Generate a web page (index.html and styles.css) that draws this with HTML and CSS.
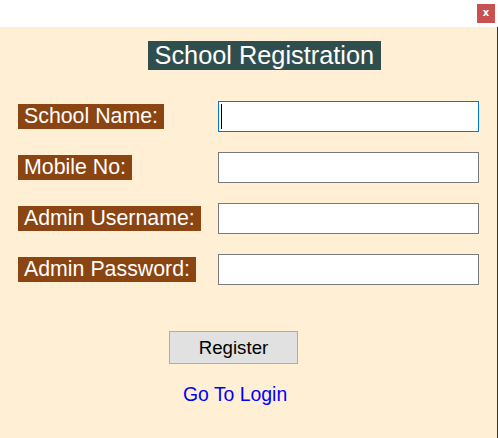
FILE: index.html
```html
<!DOCTYPE html>
<html>
<head>
<meta charset="utf-8">
<link rel="stylesheet" href="styles.css">
</head>
<body>
<div class="titlebar"><div class="close">x</div></div>
<div class="main">
  <div class="title">School Registration</div>
  <div class="form">
    <div class="label">School Name:</div>
    <div class="field"><input class="entry focused" type="text"><span class="caret"></span></div>
    <div class="label">Mobile No:</div>
    <div class="field"><input class="entry" type="text"></div>
    <div class="label">Admin Username:</div>
    <div class="field"><input class="entry" type="text"></div>
    <div class="label">Admin Password:</div>
    <div class="field"><input class="entry" type="password"></div>
  </div>
  <button class="register">Register</button>
  <div class="link">Go To Login</div>
</div>
</body>
</html>
```
FILE: styles.css
```css
html, body {
  margin: 0;
  padding: 0;
}
body {
  width: 498px;
  height: 438px;
  overflow: hidden;
  font-family: "Liberation Sans", Arial, sans-serif;
  background: #ffffff;
}
.titlebar {
  height: 27px;
  box-sizing: border-box;
  padding: 4px 3px 0 0;
  display: flex;
  justify-content: flex-end;
  align-items: flex-start;
  background: #ffffff;
}
.close {
  width: 18px;
  height: 19px;
  background: #c75050;
  color: #ffffff;
  font-family: "DejaVu Sans", sans-serif;
  font-weight: bold;
  font-size: 10px;
  line-height: 18px;
  text-align: center;
}
.main {
  width: 497px;
  height: 411px;
  background: #ffefd5;
  border-right: 1px solid #3c3128;
  display: flex;
  flex-direction: column;
  align-items: flex-start;
}
.title {
  margin: 14px 0 0 148px;
  background: #2f4f4f;
  color: #ffffff;
  font-size: 25.33px;
  line-height: 29px;
  padding: 0 6.5px;
}
.form {
  margin: 31px 0 0 18px;
  display: grid;
  grid-template-columns: 200px 261px;
  row-gap: 20px;
  align-items: center;
}
.label {
  justify-self: start;
  background: #8b4513;
  color: #ffffff;
  font-size: 21.33px;
  line-height: 25px;
  padding: 0 6px;
}
.field {
  position: relative;
  height: 31px;
}
.entry {
  display: block;
  width: 261px;
  height: 31px;
  box-sizing: border-box;
  margin: 0;
  padding: 0 3px;
  border: 1px solid #7a7a7a;
  background: #ffffff;
  outline: none;
  font-family: "Liberation Sans", Arial, sans-serif;
  font-size: 16px;
}
.entry.focused {
  border-color: #0078d7;
}
.caret {
  position: absolute;
  left: 3px;
  top: 3px;
  width: 1px;
  height: 25px;
  background: #000000;
}
.register {
  margin: 46px 0 0 169px;
  width: 129px;
  height: 33px;
  box-sizing: border-box;
  padding: 0;
  background: #e1e1e1;
  border: 1px solid #adadad;
  color: #000000;
  font-family: "Liberation Sans", Arial, sans-serif;
  font-size: 18.67px;
  line-height: 31px;
}
.link {
  margin: 19px 0 0 183px;
  color: #0000ff;
  font-size: 19.4px;
  line-height: 22px;
}
```
